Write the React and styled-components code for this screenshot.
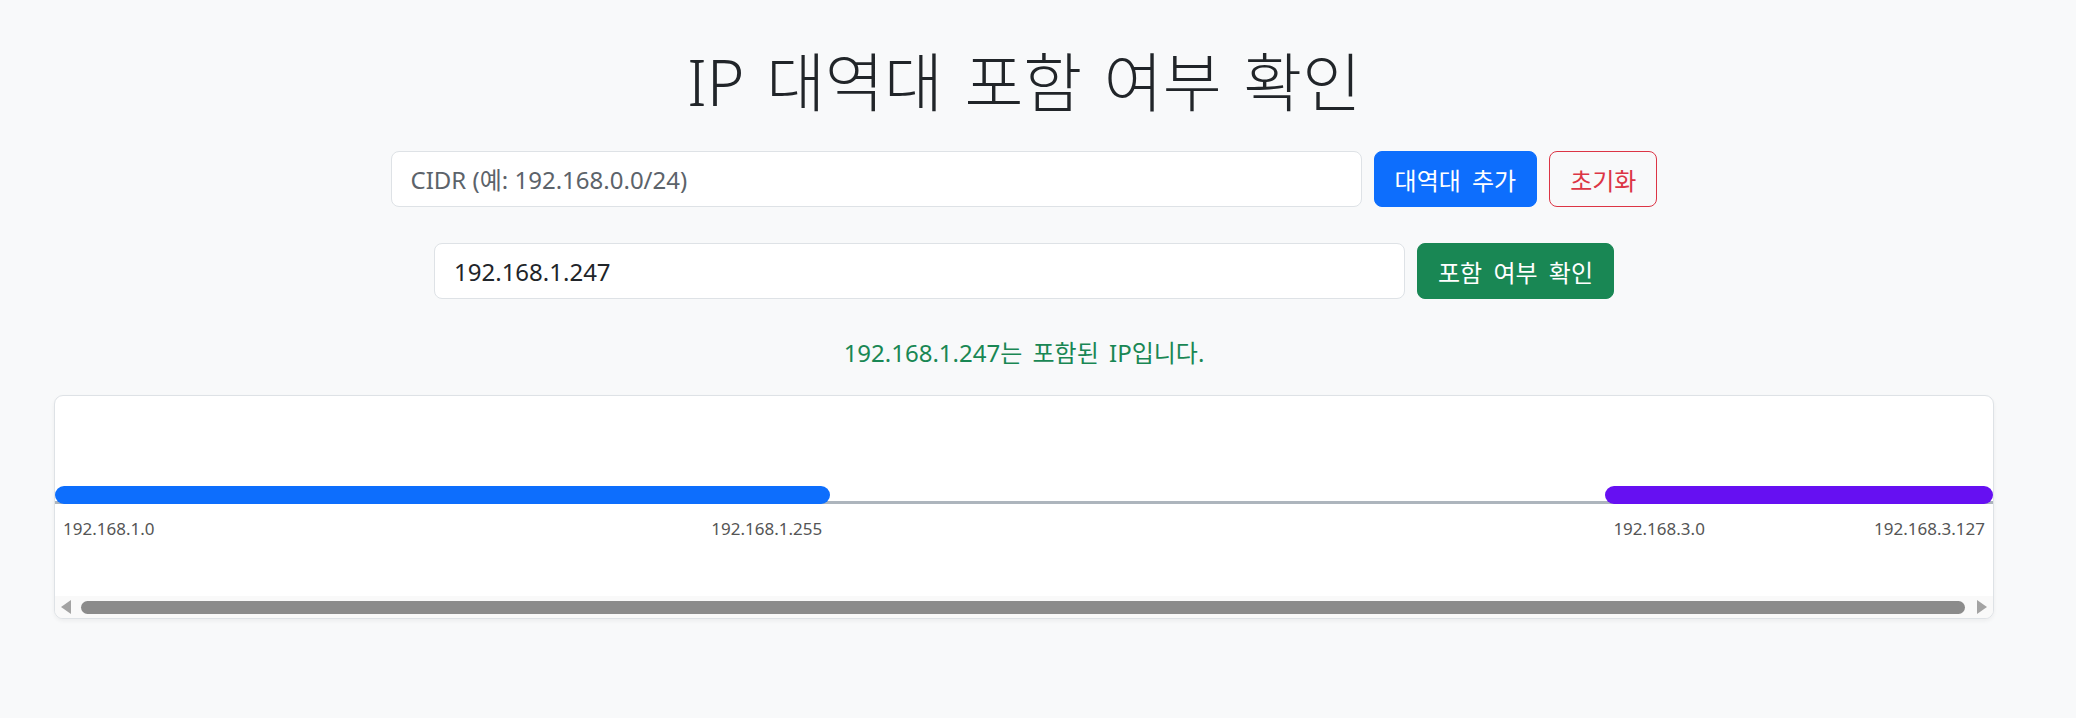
import React from "react";
import styled, { createGlobalStyle } from "styled-components";

const GlobalStyle = createGlobalStyle`
  body {
    margin: 0;
    background: #f8f9fa;
    color: #212529;
    font-family: "Noto Sans", "Noto Sans CJK KR", sans-serif;
  }
`;

const ranges = [
  { start: "192.168.1.0", end: "192.168.1.255", color: "#0d6efd" },
  { start: "192.168.3.0", end: "192.168.3.127", color: "#6610f2" },
];

const ipToNum = (ip) =>
  ip.split(".").reduce((acc, part) => acc * 256 + Number(part), 0);

const App = () => {
  const min = Math.min(...ranges.map((r) => ipToNum(r.start)));
  const max = Math.max(...ranges.map((r) => ipToNum(r.end) + 1));
  const span = max - min;

  return (
    <Page>
      <GlobalStyle />
      <Title>IP 대역대 포함 여부 확인</Title>

      <FormRow>
        <TextInput placeholder="CIDR (예: 192.168.0.0/24)" />
        <Button variant="primary">대역대 추가</Button>
        <Button variant="outlineDanger">초기화</Button>
      </FormRow>

      <FormRow>
        <TextInput defaultValue="192.168.1.247" />
        <Button variant="success">포함 여부 확인</Button>
      </FormRow>

      <Result>192.168.1.247는 포함된 IP입니다.</Result>

      <Card>
        <Timeline>
          <Axis />
          {ranges.map((r) => {
            const left = ((ipToNum(r.start) - min) / span) * 100;
            const width = ((ipToNum(r.end) + 1 - ipToNum(r.start)) / span) * 100;
            return (
              <Segment key={r.start} style={{ left: `${left}%`, width: `${width}%` }}>
                <Bar color={r.color} />
                <Labels>
                  <span>{r.start}</span>
                  <span>{r.end}</span>
                </Labels>
              </Segment>
            );
          })}
        </Timeline>
        <ScrollBar>
          <Arrow viewBox="0 0 11 14">
            <polygon points="11,0 11,14 1,7" />
          </Arrow>
          <Thumb />
          <Arrow viewBox="0 0 11 14">
            <polygon points="0,0 0,14 10,7" />
          </Arrow>
        </ScrollBar>
      </Card>
    </Page>
  );
};

export default App;

//Page
const Page = styled.div`
  width: 2048px;
  padding-top: 45px;
  padding-bottom: 60px;
`;

//Title
const Title = styled.h1`
  margin: 0 0 32px;
  text-align: center;
  font-size: 64px;
  font-weight: 300;
  line-height: 74px;
  word-spacing: 5px;
  color: #212529;
`;

//Form rows
const FormRow = styled.div`
  display: flex;
  justify-content: center;
  gap: 12px;
  margin-bottom: 36px;
  & + & {
    margin-bottom: 37px;
  }
`;

const TextInput = styled.input`
  box-sizing: border-box;
  width: 971px;
  height: 56px;
  padding: 0 19px;
  border: 1px solid #dee2e6;
  border-radius: 8px;
  background: #fff;
  font-family: inherit;
  font-size: 24px;
  color: #212529;
  outline: none;
  &::placeholder {
    color: #5c636a;
  }
`;

const variants = {
  primary: { bg: "#0d6efd", border: "#0d6efd", color: "#fff" },
  success: { bg: "#198754", border: "#198754", color: "#fff" },
  outlineDanger: { bg: "transparent", border: "#dc3545", color: "#dc3545" },
};

const Button = styled.button`
  box-sizing: border-box;
  height: 56px;
  padding: 0 20px;
  border: 1px solid ${(p) => variants[p.variant].border};
  border-radius: 8px;
  background: ${(p) => variants[p.variant].bg};
  color: ${(p) => variants[p.variant].color};
  font-family: inherit;
  font-size: 24px;
  word-spacing: 5px;
  white-space: nowrap;
  cursor: pointer;
`;

//Result message
const Result = styled.p`
  margin: 0 0 25px;
  text-align: center;
  font-size: 24px;
  line-height: 34px;
  word-spacing: 4px;
  color: #198754;
`;

//Card with timeline
const Card = styled.div`
  margin: 0 54px;
  background: #fff;
  border: 1px solid #dee2e6;
  border-radius: 9px;
  overflow: hidden;
  box-shadow: 0 2px 4px rgba(0, 0, 0, 0.05);
`;

const Timeline = styled.div`
  position: relative;
  height: 200px;
`;

const Axis = styled.div`
  position: absolute;
  left: 0;
  right: 0;
  top: 105px;
  height: 3px;
  background: #adb5bd;
`;

const Segment = styled.div`
  position: absolute;
  top: 90px;
  z-index: 1;
`;

const Bar = styled.div`
  height: 18px;
  border-radius: 9px;
  background: ${(p) => p.color};
`;

const Labels = styled.div`
  display: flex;
  justify-content: space-between;
  padding: 0 8px;
  margin-top: 12px;
  font-size: 17px;
  line-height: 26px;
  color: #555;
`;

//Scrollbar
const ScrollBar = styled.div`
  display: flex;
  align-items: center;
  gap: 10px;
  height: 22px;
  padding: 0 5px;
  background: #f9f9f9;
  svg:last-child {
    margin-left: 2px;
  }
`;

const Arrow = styled.svg`
  width: 11px;
  height: 14px;
  flex-shrink: 0;
  fill: #a3a3a3;
`;

const Thumb = styled.div`
  flex: 1;
  height: 13px;
  border-radius: 7px;
  background: #8b8b8b;
`;
